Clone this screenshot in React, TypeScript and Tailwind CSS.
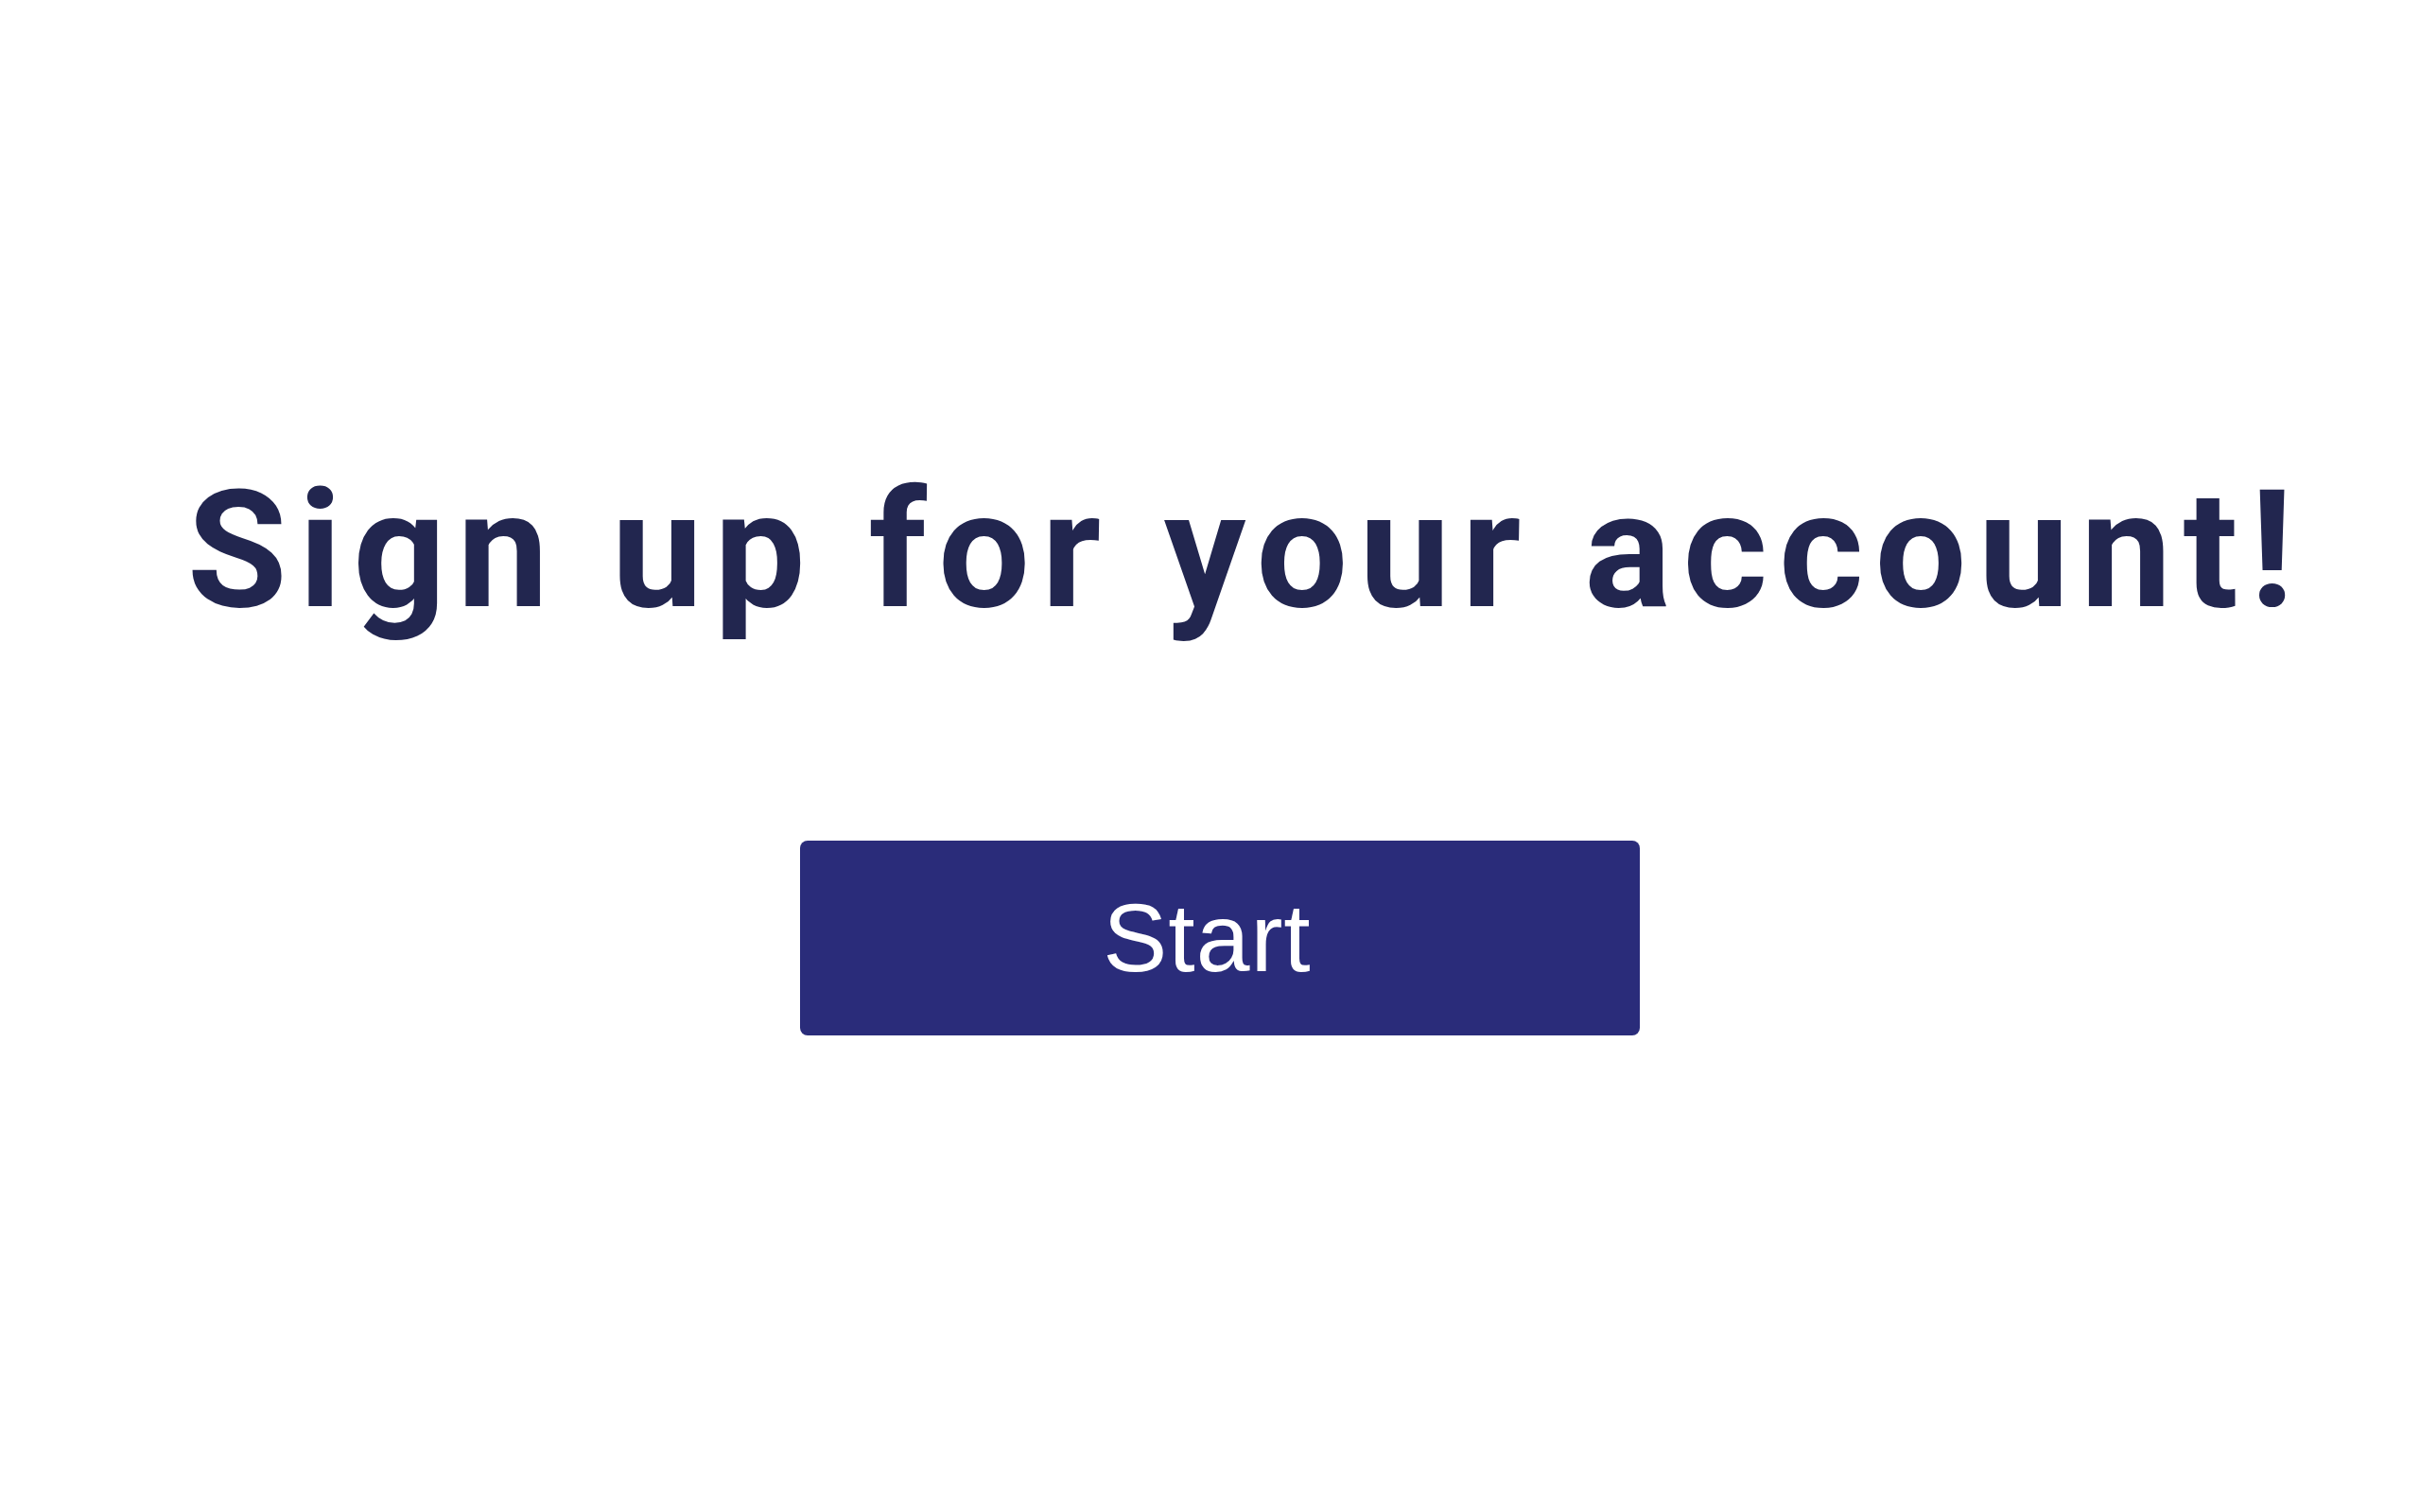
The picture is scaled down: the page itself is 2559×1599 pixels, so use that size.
export default function App() {
  return (
    <main className="flex min-h-screen flex-col items-center justify-center gap-[206px] bg-white pb-[22px] pl-[20px]">
      <h1 className="pl-[56px] font-['Roboto',sans-serif] text-[172px] leading-[1.172] font-bold tracking-[12px] whitespace-nowrap text-[#22264f]">
        Sign up for your account!
      </h1>
      <button
        type="button"
        className="flex h-[206px] w-[888px] items-center justify-center rounded-lg bg-[#2a2c7a] pr-[26px] font-['Liberation_Sans',Arial,sans-serif] text-[102px] tracking-[1px] text-white"
      >
        Start
      </button>
    </main>
  );
}
